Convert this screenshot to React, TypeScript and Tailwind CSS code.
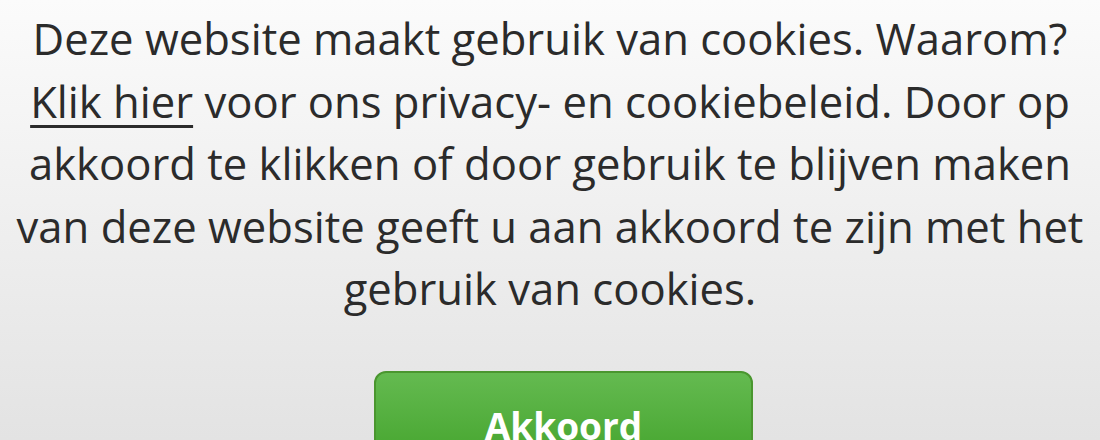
export default function App() {
  return (
    <div
      className="w-[1100px] h-[440px] overflow-hidden bg-gradient-to-b from-[#fbfbfb] to-[#e3e3e3] flex flex-col items-center pt-[7px]"
      style={{ fontFamily: '"Open Sans", "Noto Sans", sans-serif' }}
    >
      <p className="text-center text-[43.6px] leading-[62.5px] text-[#2b2b2b] whitespace-nowrap">
        Deze website maakt gebruik van cookies. Waarom?
        <br />
        <a className="underline decoration-[3px] underline-offset-[7px] text-[#2b2b2b]">Klik hier</a> voor ons privacy- en cookiebeleid. Door op
        <br />
        akkoord te klikken of door gebruik te blijven maken
        <br />
        van deze website geeft u aan akkoord te zijn met het
        <br />
        gebruik van cookies.
      </p>
      <button className="mt-[51px] ml-[27px] w-[379px] h-[90px] shrink-0 rounded-[12px] border-2 border-[#4a962f] bg-gradient-to-b from-[#64ba50] to-[#45a52d] text-white text-[37px] leading-none font-bold flex justify-center pt-[34px]">
        Akkoord
      </button>
    </div>
  );
}
